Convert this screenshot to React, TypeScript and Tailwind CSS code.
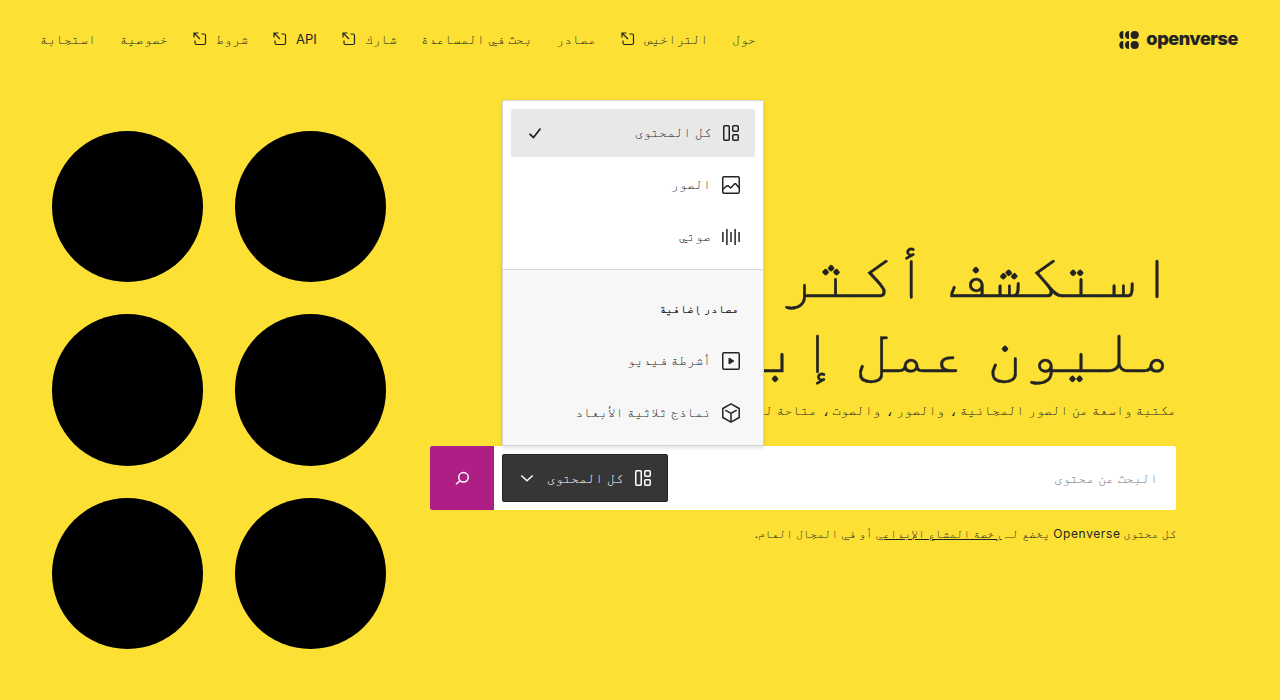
import React from "react";

type IconProps = { className?: string };

function AllIcon({ className }: IconProps) {
  return (
    <svg viewBox="0 0 24 24" fill="none" stroke="currentColor" strokeWidth="1.5" className={className}>
      <rect x="4.75" y="4.75" width="5.5" height="14.5" rx="1" />
      <rect x="13.75" y="4.75" width="5.5" height="5.5" rx="1" />
      <rect x="13.75" y="13.75" width="5.5" height="5.5" rx="1" />
    </svg>
  );
}

function ImageIcon({ className }: IconProps) {
  return (
    <svg viewBox="0 0 24 24" fill="none" stroke="currentColor" strokeWidth="1.5" className={className}>
      <rect x="3.75" y="3.75" width="16.5" height="16.5" rx="1.25" />
      <path d="M4 16.200l3.600-3.200 1.600-.2 2.500 2.200 4-4.200h1l3.400 4" />
    </svg>
  );
}

function AudioIcon({ className }: IconProps) {
  return (
    <svg viewBox="0 0 24 24" fill="none" stroke="currentColor" strokeWidth="1.5" className={className}>
      <path d="M3.900 7v10M7.900 4v16M12 7v10M16.100 4v16M20.100 7v10" />
    </svg>
  );
}

function VideoIcon({ className }: IconProps) {
  return (
    <svg viewBox="0 0 24 24" fill="none" stroke="currentColor" strokeWidth="1.5" className={className}>
      <rect x="3.75" y="3.75" width="16.5" height="16.5" rx="1.25" />
      <path d="M10 9v6l4.800-3z" fill="currentColor" strokeWidth="1" strokeLinejoin="round" />
    </svg>
  );
}

function ModelIcon({ className }: IconProps) {
  return (
    <svg viewBox="0 0 24 24" fill="none" stroke="currentColor" strokeWidth="1.5" strokeLinejoin="round" className={className}>
      <path d="M12 2.900l8.200 4.600v9L12 21.100l-8.200-4.600v-9z" />
      <path d="M6.300 9.200L12 12.400l5.700-3.200M12 12.400V21" />
    </svg>
  );
}

function ExternalIcon() {
  return (
    <svg viewBox="0 0 16 16" fill="none" stroke="currentColor" strokeWidth="1.200" className="size-4">
      <path d="M2 6.500V2h4.500M2 2l6 6" />
      <path d="M9.500 3h2.500a1.500 1.500 0 0 1 1.500 1.500v7.500a1.500 1.500 0 0 1-1.500 1.500H4.500A1.500 1.500 0 0 1 3 12V9.500" />
    </svg>
  );
}

const links = [
  { label: "حول" },
  { label: "التراخيص", external: true },
  { label: "مصادر" },
  { label: "بحث في المساعدة" },
  { label: "شارك", external: true },
  { label: "API", external: true },
  { label: "شروط", external: true },
  { label: "خصوصية" },
  { label: "استجابة" },
];

function Logo() {
  return (
    <a className="flex items-center gap-[7px] pe-0.5" dir="ltr">
      <svg viewBox="0 0 20 20" fill="currentColor" className="h-5 w-5">
        <circle cx="15.700" cy="5" r="4.100" />
        <circle cx="15.700" cy="15" r="4.100" />
        <path d="M4.300 1v8a4 4 0 0 1 0-8zM4.300 11v8a4 4 0 0 1 0-8zM10 1v8a4 4 0 0 1 0-8zM10 11v8a4 4 0 0 1 0-8z" />
      </svg>
      <span className="-translate-y-px text-[18px] leading-5 font-extrabold tracking-[-0.35px] [-webkit-text-stroke:0.2px]">
        openverse
      </span>
    </a>
  );
}

function MenuItem({ label, Icon, selected }: { label: string; Icon: (p: IconProps) => React.ReactElement; selected?: boolean }) {
  return (
    <li className={selected ? "flex h-12 items-center rounded-[2px] bg-[#e8e8e8] px-3" : "flex h-12 items-center px-3"}>
      <Icon className="size-6" />
      <span className="ms-2 grow pb-px">{label}</span>
      {selected && (
        <svg viewBox="0 0 24 24" fill="none" stroke="currentColor" strokeWidth="1.800" className="size-6">
          <path d="M6.500 12.800l4 3.700 7-9" />
        </svg>
      )}
    </li>
  );
}

function ContentMenu() {
  return (
    <div className="absolute bottom-16 left-0 w-[262px] rounded-t-[2px] border border-[#d6d4d5] bg-white text-[13.33px] leading-[17px] shadow-[0_2px_4px_rgba(0,0,0,0.12)]">
      <ul className="flex flex-col gap-1 p-2">
        <MenuItem label="كل المحتوى" Icon={AllIcon} selected />
        <MenuItem label="الصور" Icon={ImageIcon} />
        <MenuItem label="صوتي" Icon={AudioIcon} />
      </ul>
      <div className="border-t border-[#d6d4d5] bg-[#f7f7f7] p-2">
        <h2 className="px-4 pt-[23px] pb-[19px] text-[11.67px] leading-[17px] font-semibold">مصادر إضافية</h2>
        <ul className="flex flex-col gap-1">
          <MenuItem label="أشرطة فيديو" Icon={VideoIcon} />
          <MenuItem label="نماذج ثلاثية الأبعاد" Icon={ModelIcon} />
        </ul>
      </div>
    </div>
  );
}

export default function App() {
  return (
    <div
      dir="rtl"
      className="flex h-[700px] w-full flex-col overflow-hidden bg-[#fce034] font-['Inter','FreeMono',monospace] text-[#232323]"
    >
      <header className="flex h-20 shrink-0 items-center justify-between px-10">
        <Logo />
        <nav className="flex gap-6 pb-0.5 text-[13.33px] leading-[17px]">
          {links.map((l) => (
            <a key={l.label} className="flex items-center gap-2 whitespace-nowrap">
              {l.label === "API" ? <span className="text-[13px]">API</span> : l.label}
              {l.external && <ExternalIcon />}
            </a>
          ))}
        </nav>
      </header>

      <main className="flex grow justify-between ps-[104px] pe-[52px]">
        <section className="w-[746px] pt-[157px]">
          <h1 className="h-[155px] text-[63.3px] leading-[75px] whitespace-nowrap [-webkit-text-stroke:0.35px]">
            استكشف أكثر من 800
            <br />
            مليون عمل إبداعي
          </h1>
          <p className="mt-2 text-[13.4px] leading-[20px] whitespace-nowrap">
            مكتبة واسعة من الصور المجانية ، والصور ، والصوت ، متاحة للاستخدام المجاني.
          </p>
          <form className="mt-[26px] flex h-16 rounded-[2px] bg-white">
            <div className="flex grow items-center ps-[18px] pt-0.5 text-[13.33px] text-[#767676]">البحث عن محتوى</div>
            <div className="relative me-2 flex h-16 items-center">
              <button type="button" className="flex h-12 w-[166px] items-center rounded-[2px] border border-[#232323] bg-[#363636] px-3 text-[13.33px] text-white">
                <AllIcon className="size-6" />
                <span className="ms-2 grow pt-px text-start">كل المحتوى</span>
                <svg viewBox="0 0 24 24" fill="none" stroke="currentColor" strokeWidth="1.500" className="size-6">
                  <path d="M6.300 9.500l5.700 5.300 5.700-5.300" />
                </svg>
              </button>
              <ContentMenu />
            </div>
            <button type="button" className="flex w-16 items-center justify-center rounded-l-[2px] bg-[#ad1f85] text-white">
              <svg viewBox="0 0 24 24" fill="none" stroke="currentColor" strokeWidth="1.500" className="size-6">
                <circle cx="13.500" cy="11.300" r="4.800" />
                <path d="M10 14.800L6 18.300" />
              </svg>
            </button>
          </form>
          <p className="mt-[15px] text-[11.67px] leading-[17px] whitespace-nowrap">
            كل محتوى <span className="text-[12px] tracking-[0.6px]">Openverse</span> يخضع لـ <a className="underline">رخصة المشاع الإبداعي</a> أو في المجال العام.
          </p>
        </section>
        <div className="grid h-fit grid-cols-2 gap-x-[31.700px] gap-y-[32.300px] pt-[51px]">
          {[0, 1, 2, 3, 4, 5].map((i) => (
            <div key={i} className="size-[151.200px] rounded-full bg-black" />
          ))}
        </div>
      </main>
    </div>
  );
}
